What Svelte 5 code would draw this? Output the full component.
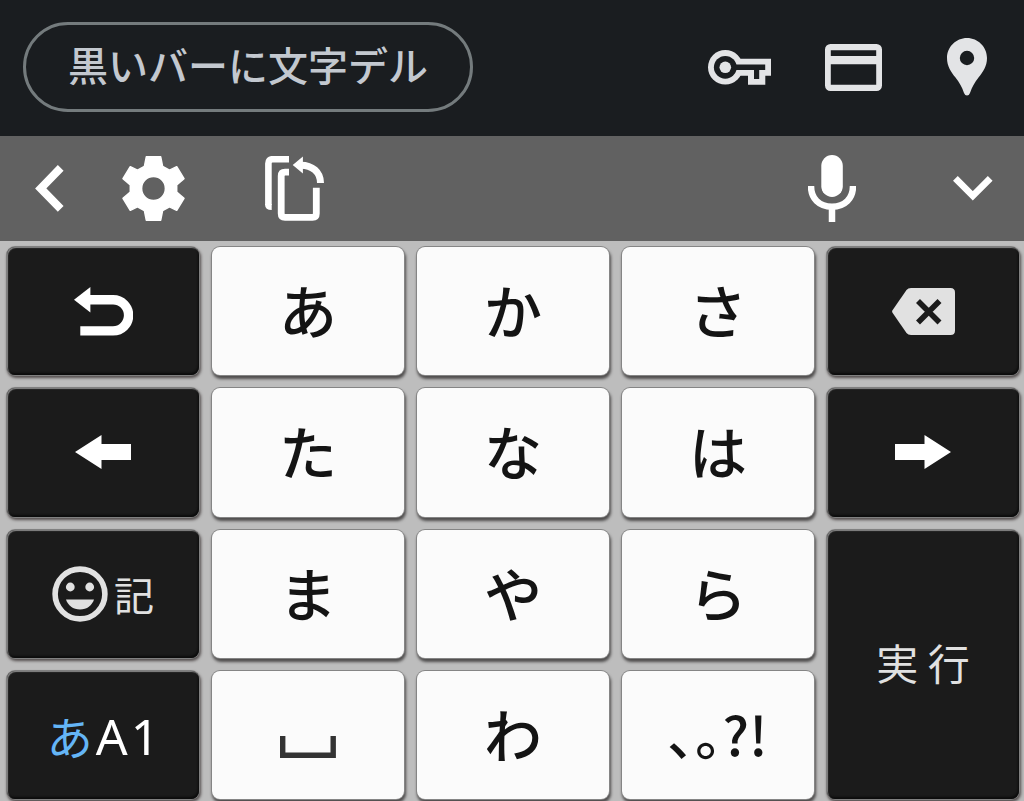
<script lang="ts">

    interface Key {
        id: string;
        label: string;
        text?: string;
        dark?: boolean;
        tall?: boolean;
    }

    const suggestion = "黒いバーに文字デル";

    const keys: Key[] = [
        { id: "undo", label: "元に戻す", dark: true },
        { id: "a", label: "あ", text: "あ" },
        { id: "ka", label: "か", text: "か" },
        { id: "sa", label: "さ", text: "さ" },
        { id: "delete", label: "削除", dark: true },

        { id: "left", label: "左へ", dark: true },
        { id: "ta", label: "た", text: "た" },
        { id: "na", label: "な", text: "な" },
        { id: "ha", label: "は", text: "は" },
        { id: "right", label: "右へ", dark: true },

        { id: "symbols", label: "絵文字・記号", dark: true },
        { id: "ma", label: "ま", text: "ま" },
        { id: "ya", label: "や", text: "や" },
        { id: "ra", label: "ら", text: "ら" },
        { id: "enter", label: "実行", dark: true, tall: true },

        { id: "mode", label: "文字種", dark: true },
        { id: "space", label: "空白" },
        { id: "wa", label: "わ", text: "わ" },
        { id: "punctuation", label: "句読点" },
    ];

</script>

<main>

    <header class="autofill">
        <button class="suggestion">{suggestion}</button>
        <nav class="autofill_icons">
            <button aria-label="パスワード">
                <svg width="63" height="35" viewBox="0 0 63 35">
                    <circle cx="17.3" cy="17.3" r="17.3" fill="#e3e4e6" />
                    <path d="M28 8.7H63V25.7H57.3V34.7H40V25.7H28Z" fill="#e3e4e6" />
                    <circle cx="17.3" cy="17.3" r="11.4" fill="#1a1d20" />
                    <path d="M26 14.6H57.2V20H51.2V29H46V20H26Z" fill="#1a1d20" />
                    <circle cx="17.3" cy="17.3" r="5.8" fill="#e3e4e6" />
                </svg>
            </button>
            <button aria-label="カード">
                <svg width="57" height="47" viewBox="0 0 57 47">
                    <path fill="#e3e4e6" fill-rule="evenodd" d="M5.5 0H51.5A5.5 5.5 0 0 1 57 5.5V41.5A5.5 5.5 0 0 1 51.5 47H5.5A5.5 5.5 0 0 1 0 41.5V5.5A5.5 5.5 0 0 1 5.5 0ZM5.8 6.2V12H51.2V6.2ZM5.8 20.2V40.8H51.2V20.2Z" />
                </svg>
            </button>
            <button aria-label="住所">
                <svg width="40" height="58" viewBox="0 0 40 58">
                    <path fill="#e3e4e6" fill-rule="evenodd" d="M20 0C9 0 0 9 0 20C0 28 4 34 8.500 39.500C12.500 44.500 15 49 17 55Q18 57.500 20 57.500Q22 57.500 23 55C25 49 27.500 44.500 31.500 39.500C36 34 40 28 40 20C40 9 31 0 20 0ZM20 12.800A7.200 7.200 0 1 1 20 27.200A7.200 7.200 0 1 1 20 12.800Z" />
                </svg>
            </button>
        </nav>
    </header>

    <div class="toolbar">
        <button aria-label="戻る">
            <svg width="29" height="47" viewBox="0 0 29 47">
                <path d="M25.700 2.900L5.700 23.400L25.700 43.900" fill="none" stroke="#fff" stroke-width="8" />
            </svg>
        </button>
        <button class="settings" aria-label="設定">
            <svg width="63" height="65" viewBox="0 0 63 65">
                <path fill="#fff" stroke="#fff" stroke-width="1.500" stroke-linejoin="round" fill-rule="evenodd" d="M24.300 0.800H38.700L40.600 10.300L47.500 14.200L54.700 10.700L62 22.700L54.700 29V36L62 42.300L54.700 54.300L47.500 50.800L40.600 54.700L38.700 64.200H24.300L22.400 54.700L15.500 50.800L8.300 54.300L1 42.300L8.300 36V29L1 22.700L8.300 10.700L15.500 14.200L22.400 10.300ZM31.500 20.600A11.900 11.900 0 1 0 31.500 44.400A11.900 11.900 0 1 0 31.500 20.600Z" />
            </svg>
        </button>
        <button class="clipboard" aria-label="クリップボード">
            <svg width="60" height="65" viewBox="0 0 60 65">
                <g fill="none" stroke="#fff">
                    <path d="M24 3.200H7.500Q3.400 3.200 3.400 7.500V49" stroke-width="6.600" />
                    <path d="M24 16.200H20Q16.200 16.200 16.200 20V57.500Q16.200 61.300 20 61.300H47.500Q51.300 61.300 51.300 57.500V31.700" stroke-width="6.800" />
                    <path d="M36 9.200C47 9.200 55.500 16 55.500 27" stroke-width="7" />
                </g>
                <path d="M27.700 8.900L37.900 0.500V17.500ZM0.100 48H6.700V54Q0.100 54 0.100 49Z" fill="#fff" />
            </svg>
        </button>
        <button class="voice" aria-label="音声入力">
            <svg width="48" height="67" viewBox="0 0 48 67">
                <rect x="13.300" y="0" width="21.500" height="42" rx="10.700" fill="#fff" />
                <path d="M3 31C3 43.500 11 51.700 24 51.700S45 43.500 45 31M24 51V67" fill="none" stroke="#fff" stroke-width="6.500" />
            </svg>
        </button>
        <button aria-label="閉じる">
            <svg width="40" height="25" viewBox="0 0 40 25">
                <path d="M2.400 2.400L19.800 19.800L37.200 2.400" fill="none" stroke="#fff" stroke-width="6.700" />
            </svg>
        </button>
    </div>

    <div class="keyboard">
        {#each keys as key (key.id)}
            <button class="key" class:dark={key.dark} class:tall={key.tall} aria-label={key.label}>
                {#if key.id === "undo"}
                    <svg width="59" height="49" viewBox="0 0 59 49">
                        <path d="M15 12.700H39A15.600 15.600 0 0 1 39 43.900H6.300" fill="none" stroke="#fff" stroke-width="9.400" />
                        <path d="M0 12.700L16.400 0V25.400Z" fill="#fff" />
                    </svg>
                {:else if key.id === "delete"}
                    <svg width="63" height="47" viewBox="0 0 63 47">
                        <path d="M19 0H58.500Q63 0 63 4.500V42.500Q63 47 58.500 47H19Q16 47 14.500 45L0.500 24.700Q-0.300 23.500 0.500 22.300L14.500 2Q16 0 19 0Z" fill="#e1e1e1" />
                        <path d="M26 13L47.500 34.500M47.500 13L26 34.500" stroke="#1b1b1b" stroke-width="5.600" />
                    </svg>
                {:else if key.id === "left"}
                    <svg width="56" height="34" viewBox="0 0 56 34">
                        <path d="M0 17L26.500 0V9H56V25H26.500V34Z" fill="#fff" />
                    </svg>
                {:else if key.id === "right"}
                    <svg width="56" height="34" viewBox="0 0 56 34">
                        <path d="M56 17L29.500 0V9H0V25H29.500V34Z" fill="#fff" />
                    </svg>
                {:else if key.id === "symbols"}
                    <span class="symbols">
                        <svg width="56" height="56" viewBox="0 0 56 56">
                            <circle cx="28" cy="28" r="24.900" fill="none" stroke="#e1e1e1" stroke-width="5.600" />
                            <circle cx="18.300" cy="21" r="4.400" fill="#e1e1e1" />
                            <circle cx="37.700" cy="21" r="4.400" fill="#e1e1e1" />
                            <path d="M14 33.500H42C40 39.500 35 43.500 28 43.500S16 39.500 14 33.500Z" fill="#e1e1e1" />
                        </svg>
                        記
                    </span>
                {:else if key.id === "enter"}
                    <span class="enter">実 行</span>
                {:else if key.id === "mode"}
                    <span class="mode"><span class="active">あ</span><span>A</span><span>1</span></span>
                {:else if key.id === "space"}
                    <svg width="56" height="46" viewBox="0 0 56 46">
                        <path d="M2.700 24V43.200H53.200V24" fill="none" stroke="#333" stroke-width="5.400" />
                    </svg>
                {:else if key.id === "punctuation"}
                    <span class="punctuation">､｡?!</span>
                {:else}
                    <span class="kana">{key.text}</span>
                {/if}
            </button>
        {/each}
    </div>

</main>

<style>

    :global(body) {
        margin: 0;
    }

    main {
        display: flex;
        flex-direction: column;
        min-height: 100vh;
        background: #bdbdbd;
        font-family: "Noto Sans CJK JP", sans-serif;
    }

    button {
        display: flex;
        align-items: center;
        justify-content: center;
        padding: 0;
        border: 0;
        background: none;
        font-family: inherit;
        cursor: pointer;
    }

    svg {
        display: block;
        flex: none;
    }

    .autofill {
        display: flex;
        align-items: center;
        justify-content: space-between;
        box-sizing: border-box;
        height: 136px;
        padding: 0 37px 2px 23px;
        background: #1a1d20;
    }

    .suggestion {
        box-sizing: border-box;
        height: 90px;
        padding: 0 42px 6px;
        border: 3px solid #747b7d;
        border-radius: 45px;
        color: #c3c8cf;
        font-size: 40px;
        font-weight: 500;
        line-height: 60px;
        white-space: nowrap;
    }

    .autofill_icons {
        display: flex;
        align-items: center;
        gap: 54px;
    }

    .autofill_icons button:last-child {
        margin-left: 11px;
    }

    .toolbar {
        display: flex;
        align-items: center;
        box-sizing: border-box;
        height: 105px;
        padding: 0 31px 0 35px;
        background: #616161;
    }

    .settings {
        margin-left: 58px;
    }

    .clipboard {
        margin-left: 80px;
    }

    .voice {
        margin-left: auto;
        margin-right: 97px;
    }

    .keyboard {
        flex: 1;
        display: grid;
        grid-template-columns: repeat(5, 1fr);
        grid-template-rows: repeat(4, minmax(96px, 1fr));
        gap: 13px;
        padding: 6px 5px 2px 7px;
    }

    .key {
        min-width: 0;
        border-radius: 8px;
        background: #fbfbfb;
        box-shadow: 0 0 0 1px #858585, 1px 3px 3px 1px #4f4d4d;
        color: #141414;
        font-size: 58px;
        font-weight: 500;
        line-height: 80px;
    }

    .key.dark {
        background: #1b1b1b;
        box-shadow: inset 1px 1px 1px #888, inset -1px -2px 2px #0c0c0c, 0 0 0 1px #808080, 1px 2px 3px 1px #534d4d;
        color: #e1e1e1;
    }

    .key.tall {
        grid-row: span 2;
    }

    .kana {
        padding-bottom: 4px;
    }

    .punctuation {
        font-size: 54px;
        padding-bottom: 4px;
    }

    .symbols {
        display: flex;
        align-items: center;
        gap: 6px;
        font-size: 40px;
        font-weight: 400;
        line-height: 56px;
    }

    .enter {
        padding-bottom: 4px;
        font-size: 42px;
        font-weight: 400;
    }

    .mode {
        display: flex;
        align-items: baseline;
        gap: 3px;
        padding-top: 4px;
        color: #fff;
        font-family: "Noto Sans", "Noto Sans CJK JP", sans-serif;
        font-size: 50px;
        font-weight: 400;
    }

    .active {
        color: #64b5f6;
        font-size: 46px;
    }

</style>
